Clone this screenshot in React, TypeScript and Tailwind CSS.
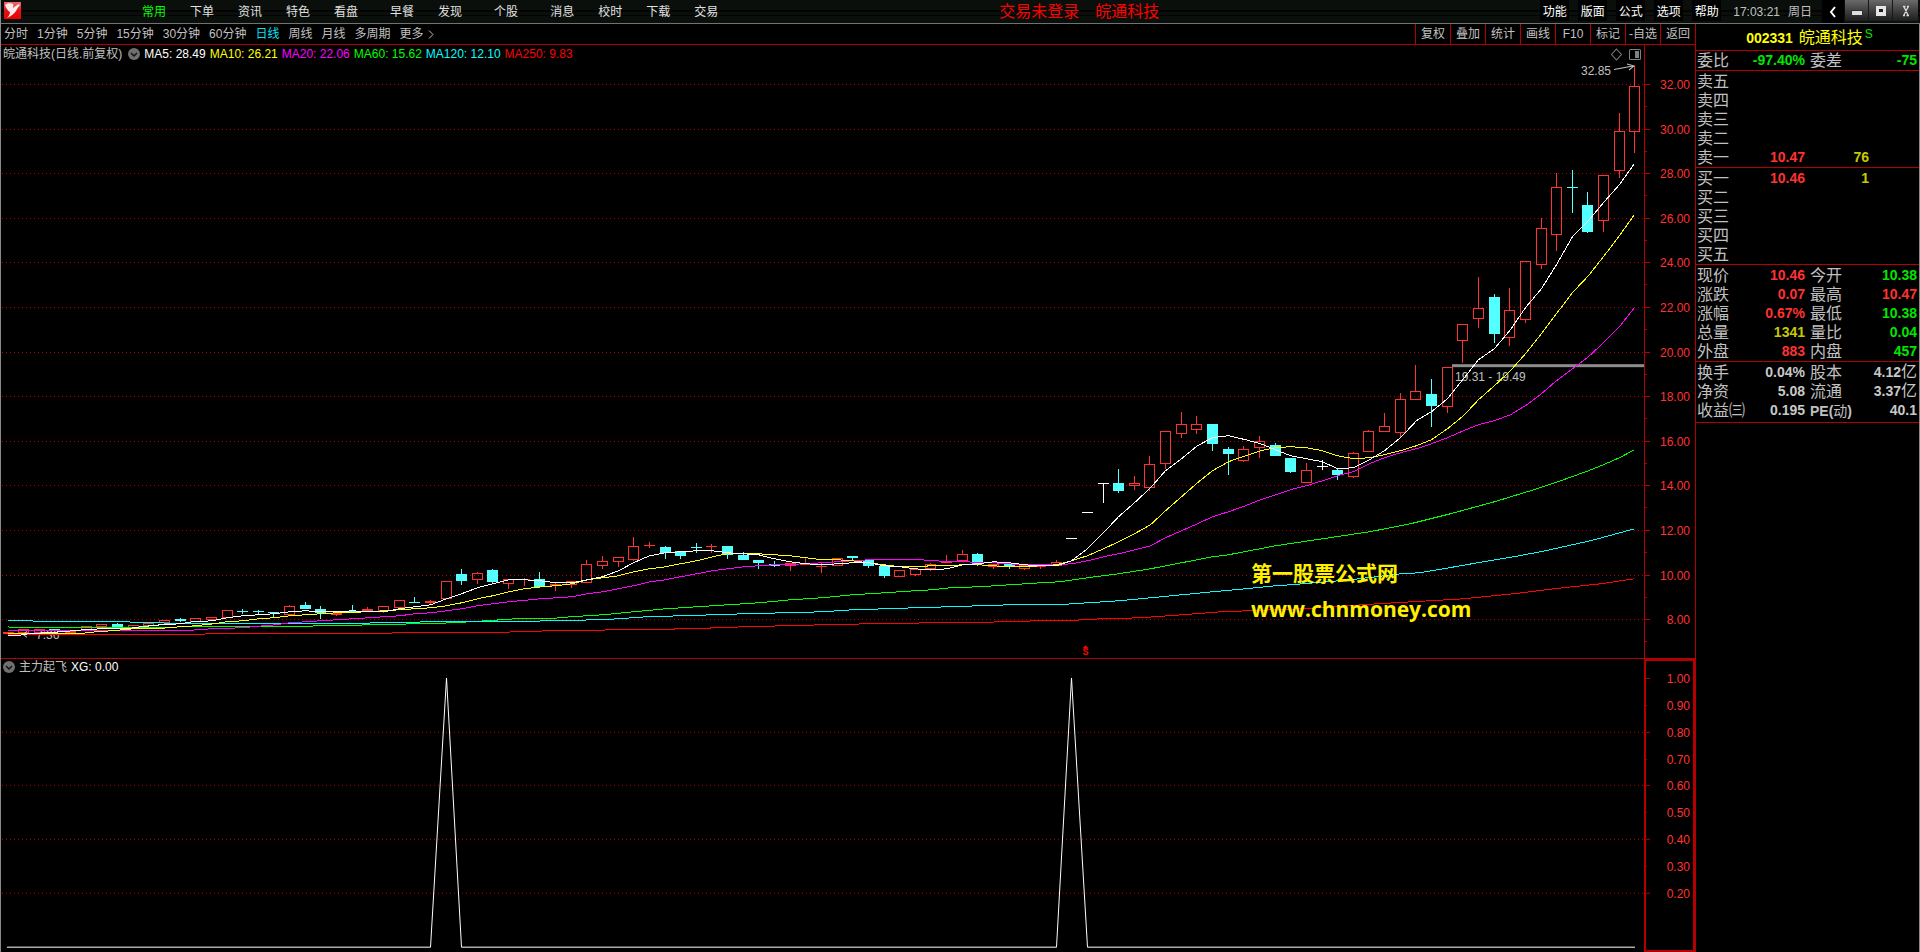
import React from "react";

type Kind = "up" | "down" | "flat";
type Candle = [high: number, low: number, top: number, bottom: number, kind: Kind];

const FIRST_BAR = 8;
const BAR_STEP = 15.643;
const barX = (i: number) => Math.floor(FIRST_BAR + i * BAR_STEP);

const candles: Candle[] = [
  [632, 634, 632, 634, "up"],
  [629, 633, 629, 633, "up"],
  [629, 633, 629, 633, "up"],
  [629, 631, 629, 630, "down"],
  [631, 633, 631, 633, "up"],
  [626, 631, 626, 631, "up"],
  [624, 627, 624, 627, "up"],
  [623, 627, 624, 627, "down"],
  [625, 628, 625, 628, "up"],
  [623, 626, 623, 626, "up"],
  [620, 623, 620, 623, "up"],
  [618, 622, 619, 621, "down"],
  [618, 622, 618, 622, "up"],
  [617, 620, 617, 620, "up"],
  [610, 618, 610, 618, "up"],
  [609, 614, 611, 612, "down"],
  [610, 614, 611, 612, "down"],
  [612, 617, 612, 613, "down"],
  [605, 615, 606, 615, "up"],
  [602, 609, 605, 609, "down"],
  [606, 619, 609, 613, "down"],
  [613, 616, 613, 615, "up"],
  [605, 612, 611, 612, "down"],
  [607, 611, 609, 611, "up"],
  [606, 613, 606, 611, "up"],
  [600, 608, 600, 608, "up"],
  [597, 603, 602, 603, "down"],
  [600, 604, 601, 603, "up"],
  [581, 599, 581, 599, "up"],
  [569, 585, 574, 581, "down"],
  [572, 584, 573, 580, "up"],
  [569, 583, 570, 582, "down"],
  [579, 589, 579, 584, "up"],
  [578, 586, 579, 580, "up"],
  [572, 588, 579, 587, "down"],
  [582, 591, 584, 586, "up"],
  [581, 588, 581, 585, "up"],
  [560, 583, 564, 583, "up"],
  [556, 569, 561, 566, "up"],
  [557, 567, 557, 562, "up"],
  [537, 561, 546, 560, "up"],
  [542, 548, 545, 546, "up"],
  [546, 559, 547, 553, "down"],
  [551, 559, 551, 556, "down"],
  [543, 553, 547, 548, "down"],
  [544, 553, 546, 547, "up"],
  [546, 559, 546, 555, "down"],
  [552, 560, 555, 560, "down"],
  [560, 569, 560, 563, "down"],
  [561, 567, 564, 566, "down"],
  [563, 571, 563, 566, "up"],
  [557, 565, 563, 565, "up"],
  [562, 573, 566, 567, "up"],
  [558, 566, 558, 566, "up"],
  [556, 560, 556, 558, "down"],
  [560, 568, 560, 566, "down"],
  [566, 578, 566, 576, "down"],
  [570, 577, 570, 577, "up"],
  [569, 576, 569, 575, "up"],
  [563, 571, 564, 569, "up"],
  [555, 563, 561, 563, "up"],
  [550, 561, 554, 561, "up"],
  [553, 566, 554, 564, "down"],
  [564, 569, 564, 567, "up"],
  [564, 569, 564, 567, "down"],
  [565, 570, 565, 569, "up"],
  [565, 569, 565, 567, "up"],
  [560, 566, 562, 566, "up"],
  [538, 539, 538, 539, "flat"],
  [512, 513, 512, 513, "flat"],
  [483, 503, 483, 484, "flat"],
  [469, 493, 483, 491, "down"],
  [476, 490, 483, 486, "up"],
  [456, 491, 464, 488, "up"],
  [431, 469, 431, 464, "up"],
  [412, 438, 424, 434, "up"],
  [416, 434, 424, 430, "up"],
  [424, 451, 424, 444, "down"],
  [447, 475, 449, 454, "down"],
  [446, 462, 449, 461, "up"],
  [436, 458, 441, 448, "up"],
  [443, 456, 445, 456, "down"],
  [458, 473, 458, 472, "down"],
  [463, 483, 470, 483, "up"],
  [460, 470, 466, 467, "flat"],
  [469, 480, 470, 475, "down"],
  [452, 478, 453, 477, "up"],
  [430, 452, 431, 452, "up"],
  [413, 432, 426, 432, "up"],
  [393, 437, 399, 433, "up"],
  [365, 400, 391, 400, "up"],
  [379, 427, 394, 406, "down"],
  [367, 413, 367, 407, "up"],
  [324, 363, 324, 341, "up"],
  [277, 328, 308, 319, "up"],
  [294, 343, 297, 334, "down"],
  [288, 346, 310, 338, "up"],
  [261, 323, 261, 320, "up"],
  [218, 269, 228, 265, "up"],
  [173, 251, 187, 235, "up"],
  [170, 213, 187, 188, "down"],
  [192, 233, 205, 232, "down"],
  [175, 232, 175, 221, "up"],
  [113, 178, 131, 171, "up"],
  [66, 153, 86, 132, "up"],
];

const averages = [
  {
    color: "#ff0000",
    points:
      "7,634 203,634 205,633 390,633 392,632 485,632 547,630 618,629 688,628 743,626 821,624 868,623 931,622 1009,621 1035,620 1064,620 1100,618 1140,617 1181,614 1220,611 1300,608 1377,603 1463,598 1513,593 1553,588 1600,583 1634,578",
  },
  {
    color: "#00ff00",
    points:
      "7,626 16,627 163,627 180,626 250,626 328,625 370,624 415,623 453,622 485,620 515,618 547,618 570,616 602,614 633,611 665,608 696,606 727,604 758,602 790,599 821,597 852,594 884,592 914,590 931,589 950,587 978,586 1009,584 1040,582 1059,581 1087,577 1118,573 1150,568 1181,562 1212,556 1228,554 1275,545 1322,538 1369,531 1410,523 1450,513 1494,501 1530,490 1563,479 1588,470 1603,464 1619,457 1634,449",
  },
  {
    color: "#00ffff",
    points:
      "7,620 32,620 34,621 125,621 145,622 235,623 330,623 430,621 500,621 550,620 595,619 618,618 645,616 680,615 712,614 743,613 821,611 852,609 884,608 914,607 947,606 978,605 1009,604 1056,604 1087,602 1118,600 1150,597 1181,594 1212,591 1245,588 1275,585 1290,584 1350,579 1400,573 1419,572 1443,568 1477,562 1513,556 1540,551 1563,546 1590,540 1634,528",
  },
  {
    color: "#ff00ff",
    points:
      "7,630 187,630 195,629 211,628 240,627 275,624 289,622 305,621 320,620 336,619 352,618 383,616 399,615 414,613 430,612 446,610 461,608 477,605 492,603 508,601 540,598 571,596 587,593 602,591 618,588 633,585 649,581 665,579 680,576 696,573 712,570 727,568 743,566 758,565 774,564 806,563 821,562 837,561 852,560 868,559 921,559 931,560 962,561 993,562 1024,564 1056,564 1071,563 1087,560 1103,556 1118,553 1134,549 1150,545 1165,537 1181,530 1197,523 1212,516 1228,511 1245,505 1260,499 1275,494 1290,489 1306,485 1322,480 1337,475 1353,471 1369,463 1384,457 1400,452 1416,448 1431,443 1447,437 1463,430 1478,424 1494,420 1510,414 1525,405 1541,393 1556,380 1572,368 1588,356 1603,342 1619,326 1634,307",
  },
  {
    color: "#ffff00",
    points:
      "7,633 78,633 95,631 110,630 133,628 155,628 179,626 195,625 203,624 213,623 226,621 242,620 258,618 273,617 289,615 305,614 320,613 336,612 367,611 383,610 399,609 414,608 430,607 446,605 461,602 477,598 492,595 508,591 524,588 540,586 555,585 571,583 587,579 602,577 618,575 633,571 649,568 665,566 680,563 696,560 712,556 727,553 758,553 774,554 790,555 806,557 821,559 837,559 852,560 868,562 884,564 900,566 914,566 931,565 947,565 962,564 978,564 993,565 1009,566 1024,566 1040,565 1056,564 1071,560 1087,555 1103,548 1118,541 1134,533 1150,524 1165,510 1181,496 1197,482 1212,470 1228,461 1245,455 1260,450 1275,447 1290,446 1306,447 1322,450 1337,455 1353,458 1369,457 1384,454 1400,450 1416,445 1431,439 1447,428 1463,415 1478,399 1494,385 1510,370 1525,353 1541,333 1556,313 1572,292 1588,275 1603,256 1619,235 1634,214",
  },
  {
    color: "#ffffff",
    points:
      "7,635 15,635 28,633 44,632 60,631 83,629 100,628 125,628 140,626 160,624 179,623 192,621 212,620 226,617 242,615 258,614 273,613 289,611 305,610 320,611 336,611 352,610 367,611 383,611 399,608 414,606 430,604 446,598 461,593 477,587 492,583 508,579 524,579 540,580 555,582 571,582 587,579 602,576 618,570 633,562 649,555 665,552 680,551 696,550 712,550 727,552 743,553 758,554 774,558 790,561 806,563 821,564 837,563 852,562 868,562 884,565 900,566 914,568 931,569 947,568 962,564 978,563 993,561 1009,562 1024,564 1040,565 1056,565 1071,560 1087,548 1103,532 1118,516 1134,502 1150,487 1165,470 1181,458 1197,445 1212,437 1228,435 1245,439 1260,443 1275,449 1290,455 1306,458 1322,461 1337,468 1353,467 1369,459 1384,450 1400,437 1416,420 1431,411 1447,398 1463,378 1478,359 1494,348 1510,329 1525,307 1541,288 1556,264 1572,236 1588,220 1603,202 1619,184 1634,163",
  },
];

const priceTicks: [number, string][] = [
  [84, "32.00"],
  [129, "30.00"],
  [173, "28.00"],
  [218, "26.00"],
  [262, "24.00"],
  [307, "22.00"],
  [352, "20.00"],
  [396, "18.00"],
  [441, "16.00"],
  [485, "14.00"],
  [530, "12.00"],
  [575, "10.00"],
  [619, "8.00"],
];

const signalTicks: [number, string][] = [
  [678, "1.00"],
  [705, "0.90"],
  [732, "0.80"],
  [759, "0.70"],
  [785, "0.60"],
  [812, "0.50"],
  [839, "0.40"],
  [866, "0.30"],
  [893, "0.20"],
];

const LINE = "#b40000";

const kindColor: Record<Kind, string> = { up: "#ff3232", down: "#54ffff", flat: "#ffffff" };

function CandleShape({ candle, index }: { candle: Candle; index: number }) {
  const [high, low, top, bottom, kind] = candle;
  const x = barX(index);
  const color = kindColor[kind];
  const height = bottom - top;
  const hollow = kind === "up" && height > 2;
  return (
    <g>
      {high < top && <rect x={x} y={high} width={1} height={top - high} fill={color} />}
      {low > bottom && <rect x={x} y={bottom} width={1} height={low - bottom} fill={color} />}
      {hollow ? (
        <rect x={x - 4.5} y={top + 0.5} width={10} height={height - 1} fill="none" stroke={color} />
      ) : (
        <rect x={x - 5} y={top} width={11} height={height} fill={color} />
      )}
    </g>
  );
}

function PriceChart() {
  return (
    <svg
      className="col-start-1 row-start-1 h-full w-full"
      viewBox="1 45 1694 613"
      preserveAspectRatio="none"
      role="img"
      aria-label="日线"
    >
      <g shapeRendering="crispEdges">
        {priceTicks.map(([y]) => (
          <g key={y}>
            <path d={`M2 ${y + 0.5}H1644`} stroke={LINE} strokeDasharray="1 3" />
            <path d={`M1645 ${y + 0.5}h5`} stroke={LINE} />
            <path d={`M1645 ${y + 22.5}h2`} stroke={LINE} />
          </g>
        ))}
        <path d="M1644.5 45V658" stroke={LINE} />
      </g>
      <g shapeRendering="crispEdges">
        {candles.map((c, i) => (
          <CandleShape key={i} candle={c} index={i} />
        ))}
      </g>
      <g fontFamily="'Liberation Sans', Arial, sans-serif" fontSize="12" fill="#c0c0c0">
        <text x="36" y="639">7.36</text>
        <text x="1581" y="75">32.85</text>
        <text x="1455" y="381">19.31 - 19.49</text>
      </g>
      <path d="M23 634h10M27 631l-4 3 4 3" fill="none" stroke="#c0c0c0" />
      <path d="M1614 69.5L1633 66M1627 64l7 2-5 4" fill="none" stroke="#c0c0c0" />
      <rect x="1452" y="364" width="192" height="3" fill="#8c8c8c" />
      <g shapeRendering="crispEdges" fill="none">
        {averages.map((a) => (
          <polyline key={a.color} points={a.points} stroke={a.color} transform="translate(0.5 0.5)" />
        ))}
      </g>
      <g fontFamily="'Liberation Sans', Arial, sans-serif" fontSize="12" fill="#ff3232" textAnchor="end">
        {priceTicks.map(([y, label]) => (
          <text key={y} x="1690" y={y + 5}>{label}</text>
        ))}
      </g>
      <path d="M1616.500 49l5 5.500-5 5.500-5-5.500z" fill="none" stroke="#808080" />
      <rect x="1629.500" y="49.500" width="11" height="10" rx="1" fill="none" stroke="#808080" />
      <rect x="1635" y="51" width="4" height="7" fill="#808080" />
      <path d="M1085.500 645l3 3h-6z" fill="#ff0000" />
      <text
        x="1085.500"
        y="655"
        textAnchor="middle"
        fontFamily="'Liberation Mono', monospace"
        fontSize="10"
        fontWeight="bold"
        fill="#ff0000"
      >
        S
      </text>
      <g fill="#fff000" fontWeight="bold">
        <text x="1251" y="581" fontSize="21" fontFamily="'Noto Sans CJK SC', sans-serif">第一股票公式网</text>
        <text x="1251" y="617" fontSize="21" fontFamily="'Open Sans', 'Noto Sans', sans-serif">www.chnmoney.com</text>
      </g>
    </svg>
  );
}

function SignalChart() {
  return (
    <svg
      className="col-start-1 row-start-1 h-full w-full"
      viewBox="1 659 1694 293"
      preserveAspectRatio="none"
      role="img"
      aria-label="主力起飞"
    >
      <g shapeRendering="crispEdges">
        {signalTicks.map(([y], i) => (
          <g key={y}>
            {i > 0 && i % 2 === 0 && <path d={`M2 ${y + 0.5}H1644`} stroke={LINE} strokeDasharray="1 3" />}
            <path d={`M1646 ${y + 0.5}h${i % 2 === 0 ? 4 : 1}`} stroke={LINE} />
          </g>
        ))}
        <rect x="1645" y="660" width="49" height="291" fill="none" stroke={LINE} strokeWidth="2" />
        <polyline
          points="7,947.5 430.5,947.5 446.5,678 461.5,947.5 1056.5,947.5 1071.5,678 1087.5,947.5 1635,947.5"
          fill="none"
          stroke="#ffffff"
        />
      </g>
      <g fontFamily="'Liberation Sans', Arial, sans-serif" fontSize="12" fill="#ff3232" textAnchor="end">
        {signalTicks.map(([y, label]) => (
          <text key={y} x="1690" y={y + 5}>{label}</text>
        ))}
      </g>
    </svg>
  );
}

function CollapseIcon() {
  return (
    <svg className="h-3 w-3 shrink-0" viewBox="0 0 12 12" aria-hidden="true">
      <circle cx="6" cy="6" r="6" fill="#707070" />
      <path d="M3 5l3 3 3-3" fill="none" stroke="#101010" strokeWidth="1.500" />
    </svg>
  );
}

const navItems: { label: string; className: string }[] = [
  { label: "常用", className: "text-[#00ff00]" },
  { label: "下单", className: "" },
  { label: "资讯", className: "" },
  { label: "特色", className: "" },
  { label: "看盘", className: "" },
  { label: "早餐", className: "ml-2" },
  { label: "发现", className: "" },
  { label: "个股", className: "ml-2" },
  { label: "消息", className: "ml-2" },
  { label: "校时", className: "" },
  { label: "下载", className: "" },
  { label: "交易", className: "" },
];

function Header() {
  return (
    <header className="flex h-6 shrink-0 items-stretch border-b border-[#6e7472] bg-[linear-gradient(#0a0f0b_0_10px,#020302_10px_12px,#0a0f0b_12px_15px,#020302_15px_16px,#0a0f0b_16px)] text-xs text-[#e0e0e0]">
      <div className="w-[129px] pl-[3px] pt-[2px]">
        <svg className="h-[17px] w-[17px]" viewBox="0 0 17 17" aria-hidden="true">
          <defs>
            <linearGradient id="logo" x1="0" y1="0" x2="0" y2="1">
              <stop offset="0" stopColor="#f4696b" />
              <stop offset="0.500" stopColor="#e01418" />
              <stop offset="1" stopColor="#f00000" />
            </linearGradient>
          </defs>
          <rect width="17" height="17" fill="url(#logo)" />
          <path d="M1 3C3 1 6 1 9 2c1 1 0 2 0 4 2-2 4-3 6-4l1 1c-2 2-3 4-4 6-2 3-5 5-9 7 2-2 3-4 3-6-2-1-4-4-5-7z" fill="#ffecec" />
        </svg>
      </div>
      <nav className="flex">
        {navItems.map((n) => (
          <button key={n.label} type="button" className={`px-3 ${n.className}`}>
            {n.label}
          </button>
        ))}
      </nav>
      <p className="ml-[269px] flex items-center gap-4 whitespace-nowrap text-base leading-none text-[#ff0000]">
        <span>交易未登录</span>
        <span>皖通科技</span>
      </p>
      <div className="ml-auto flex">
        <div className="flex gap-[9px] pb-[2px] text-white">
          {["功能", "版面", "公式", "选项", "帮助"].map((t) => (
            <button key={t} type="button" className="w-[29px] whitespace-nowrap bg-black pt-[2px]">
              {t}
            </button>
          ))}
        </div>
        <div className="flex items-center gap-2 pl-3 pr-[10px] text-[#c0c0c0]">
          <time>17:03:21</time>
          <span>周日</span>
        </div>
        <button type="button" aria-label="收起" className="flex w-[22px] items-center justify-center bg-black">
          <svg className="h-3 w-2" viewBox="0 0 8 12" aria-hidden="true">
            <path d="M6 1L2 6l4 5" fill="none" stroke="#ffffff" strokeWidth="2" />
          </svg>
        </button>
        <div className="mb-[2px] ml-px mr-[2px] flex">
          <button
            type="button"
            aria-label="最小化"
            className="flex w-6 items-center justify-center border-r border-[#181818] bg-linear-to-b from-[#6a6a6a] to-[#1c1c1c]"
          >
            <svg className="h-3 w-3" viewBox="0 0 12 12" aria-hidden="true">
              <rect y="5" width="12" height="6" rx="1" fill="#303030" />
              <rect x="1" y="6" width="10" height="4" fill="#dedede" />
            </svg>
          </button>
          <button
            type="button"
            aria-label="最大化"
            className="flex w-6 items-center justify-center border-r border-[#181818] bg-linear-to-b from-[#6a6a6a] to-[#1c1c1c]"
          >
            <svg className="h-3 w-3" viewBox="0 0 12 12" aria-hidden="true">
              <rect x="1" y="1" width="10" height="10" fill="#e6e6e6" />
              <rect x="4" y="4" width="4" height="3" fill="#202020" />
            </svg>
          </button>
          <button
            type="button"
            aria-label="关闭"
            className="flex w-[25px] items-center justify-center bg-linear-to-b from-[#6a6a6a] to-[#1c1c1c]"
          >
            <svg className="h-3 w-3" viewBox="0 0 12 12" aria-hidden="true">
              <path d="M3 1.500h2.500M7 1.500h2M3 10.500h2M6.500 10.500H9M4 2l4 8M8 2l-4 8" fill="none" stroke="#dadada" strokeWidth="1.300" />
            </svg>
          </button>
        </div>
      </div>
    </header>
  );
}

const periods = ["分时", "1分钟", "5分钟", "15分钟", "30分钟", "60分钟", "日线", "周线", "月线", "多周期"];
const tools = ["复权", "叠加", "统计", "画线", "F10", "标记", "-自选", "返回"];

function Toolbar() {
  return (
    <div className="flex h-[21px] shrink-0 items-stretch border-b border-[#b40000] text-xs text-[#c0c0c0]">
      <div className="flex gap-[9px] pl-[3px]">
        {periods.map((p) => (
          <button key={p} type="button" className={p === "日线" ? "text-[#02e2f4]" : ""}>
            {p}
          </button>
        ))}
        <button type="button" className="flex items-center gap-1">
          更多
          <svg className="h-[9px] w-[6px]" viewBox="0 0 6 9" aria-hidden="true">
            <path d="M1 0.500l4 4-4 4" fill="none" stroke="#c0c0c0" />
          </svg>
        </button>
      </div>
      <div className="ml-auto flex">
        {tools.map((t) => (
          <button key={t} type="button" className="w-[35px] whitespace-nowrap border-l border-[#b40000]">
            {t}
          </button>
        ))}
      </div>
    </div>
  );
}

function OrderTable({ rows }: { rows: [string, string, string][] }) {
  return (
    <div className="border-b border-[#b40000] pt-px">
      <table className="w-full table-fixed text-sm">
        <colgroup>
          <col className="w-[50px]" />
          <col className="w-[59px]" />
          <col className="w-[64px]" />
          <col />
        </colgroup>
        <tbody>
          {rows.map(([label, price, amount]) => (
            <tr key={label} className="h-[19px] leading-[19px]">
              <th scope="row" className="p-0 pl-px text-left text-base font-normal leading-[19px]">
                {label}
              </th>
              <td className="p-0 text-right font-bold text-[#ff3232]">{price}</td>
              <td className="p-0 text-right font-bold text-[#c8c800]">{amount}</td>
              <td className="p-0" />
            </tr>
          ))}
        </tbody>
      </table>
    </div>
  );
}

type Field = { label: string; value: string; unit?: string; color: string };

function FieldTable({ rows, className }: { rows: [Field, Field][]; className: string }) {
  return (
    <div className={`border-b border-[#b40000] ${className}`}>
      <table className="w-full table-fixed text-sm">
        <colgroup>
          <col className="w-[50px]" />
          <col className="w-[59px]" />
          <col className="w-[50px]" />
          <col />
        </colgroup>
        <tbody>
          {rows.map(([a, b]) => (
            <tr key={a.label} className="h-[19px] whitespace-nowrap leading-[19px]">
              <th scope="row" className="p-0 pl-px text-left text-base font-normal leading-[19px]">
                {a.label}
              </th>
              <td className={`p-0 text-right font-bold ${a.color}`}>{a.value}</td>
              <th scope="row" className="p-0 pl-[5px] text-left text-base font-normal leading-[19px]">
                {b.label.startsWith("PE") ? (
                  <span className="text-sm font-bold leading-none">
                    PE(<span className="font-normal">动</span>)
                  </span>
                ) : (
                  b.label
                )}
              </th>
              <td className={`p-0 pr-[2px] text-right font-bold ${b.color}`}>
                {b.value}
                {b.unit && <span className="text-base font-normal leading-none">{b.unit}</span>}
              </td>
            </tr>
          ))}
        </tbody>
      </table>
    </div>
  );
}

const RED = "text-[#ff3232]";
const GREEN = "text-[#00e600]";
const GRAY = "text-[#c8c8c8]";

function Sidebar() {
  return (
    <aside className="flex w-[225px] shrink-0 flex-col border-l border-r border-l-[#b40000] border-r-[#8a8a8a] text-[#c0c0c0]">
      <h1 className="flex h-[27px] items-center justify-center border-b border-[#b40000] pl-1 pt-px text-[#ffff00]">
        <span className="text-sm font-bold">002331</span>
        <span className="ml-[6px] text-base leading-none">皖通科技</span>
        <span className="mb-2 ml-[2px] text-xs leading-none text-[#00e600]">S</span>
      </h1>
      <FieldTable
        className=""
        rows={[
          [
            { label: "委比", value: "-97.40%", color: GREEN },
            { label: "委差", value: "-75", color: GREEN },
          ],
        ]}
      />
      <OrderTable
        rows={[
          ["卖五", "", ""],
          ["卖四", "", ""],
          ["卖三", "", ""],
          ["卖二", "", ""],
          ["卖一", "10.47", "76"],
        ]}
      />
      <OrderTable
        rows={[
          ["买一", "10.46", "1"],
          ["买二", "", ""],
          ["买三", "", ""],
          ["买四", "", ""],
          ["买五", "", ""],
        ]}
      />
      <FieldTable
        className="pt-px"
        rows={[
          [{ label: "现价", value: "10.46", color: RED }, { label: "今开", value: "10.38", color: GREEN }],
          [{ label: "涨跌", value: "0.07", color: RED }, { label: "最高", value: "10.47", color: RED }],
          [{ label: "涨幅", value: "0.67%", color: RED }, { label: "最低", value: "10.38", color: GREEN }],
          [{ label: "总量", value: "1341", color: "text-[#c8c800]" }, { label: "量比", value: "0.04", color: GREEN }],
          [{ label: "外盘", value: "883", color: RED }, { label: "内盘", value: "457", color: GREEN }],
        ]}
      />
      <FieldTable
        className="pb-[2px] pt-px"
        rows={[
          [{ label: "换手", value: "0.04%", color: GRAY }, { label: "股本", value: "4.12", unit: "亿", color: GRAY }],
          [{ label: "净资", value: "5.08", color: GRAY }, { label: "流通", value: "3.37", unit: "亿", color: GRAY }],
          [{ label: "收益㈢", value: "0.195", color: GRAY }, { label: "PE(动)", value: "40.1", color: GRAY }],
        ]}
      />
    </aside>
  );
}

export default function App() {
  return (
    <div className="flex h-screen flex-col overflow-hidden border-l border-[#8a8a8a] bg-black font-['Liberation_Sans','Noto_Sans_CJK_SC',sans-serif]">
      <Header />
      <div className="flex min-h-0 flex-1">
        <main className="flex min-w-0 flex-1 flex-col">
          <Toolbar />
          <section className="grid min-h-0 flex-[614] grid-cols-[minmax(0,1fr)] grid-rows-[minmax(0,1fr)] border-b border-[#b40000]">
            <PriceChart />
            <div className="col-start-1 row-start-1 flex items-center gap-1 self-start whitespace-nowrap pl-[2px] text-xs leading-[18px]">
              <span className="mr-[2px] text-[#c0c0c0]">皖通科技(日线.前复权)</span>
              <CollapseIcon />
              <span className="text-white">MA5: 28.49</span>
              <span className="text-[#ffff00]">MA10: 26.21</span>
              <span className="text-[#ff00ff]">MA20: 22.06</span>
              <span className="text-[#00ff00]">MA60: 15.62</span>
              <span className="text-[#00ffff]">MA120: 12.10</span>
              <span className="text-[#ff0000]">MA250: 9.83</span>
            </div>
          </section>
          <section className="grid min-h-0 flex-[293] grid-cols-[minmax(0,1fr)] grid-rows-[minmax(0,1fr)]">
            <SignalChart />
            <div className="col-start-1 row-start-1 flex items-center gap-1 self-start pl-[2px] text-xs leading-4">
              <CollapseIcon />
              <span className="text-[#c0c0c0]">主力起飞</span>
              <span className="text-white">XG: 0.00</span>
            </div>
          </section>
        </main>
        <Sidebar />
      </div>
    </div>
  );
}
